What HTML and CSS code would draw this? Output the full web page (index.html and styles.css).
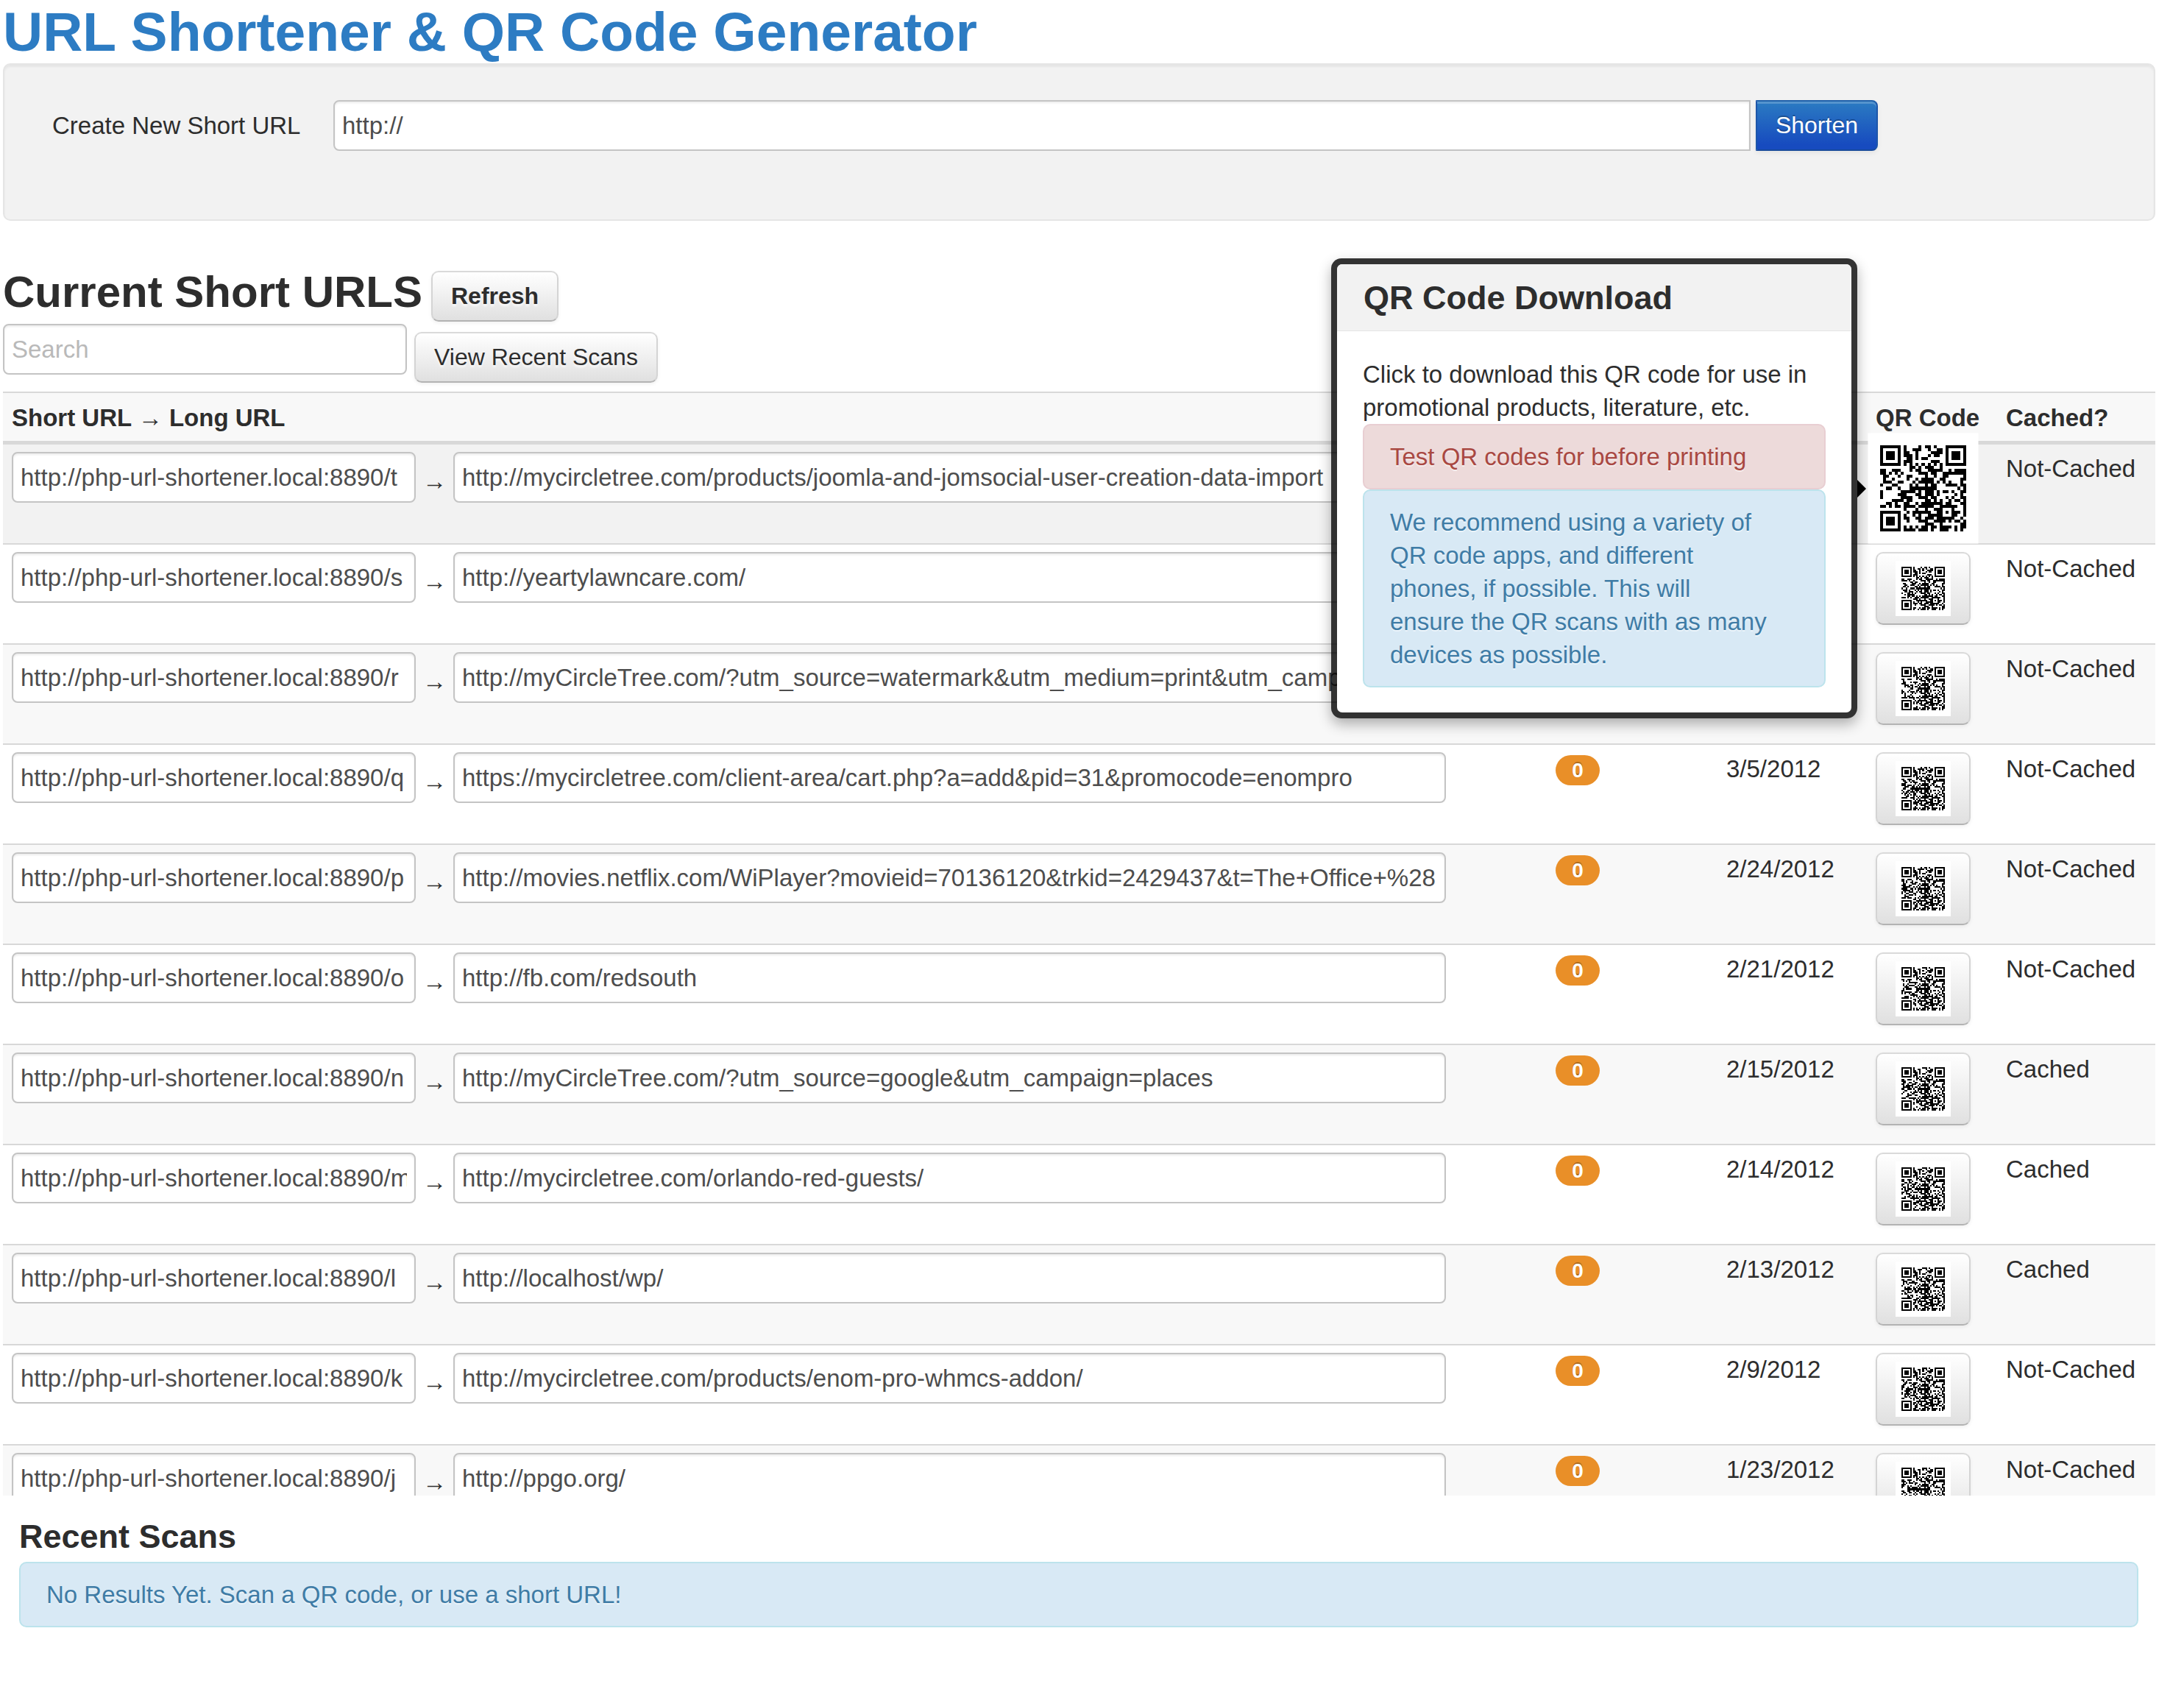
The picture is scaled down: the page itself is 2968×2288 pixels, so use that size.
FILE: index.html
```html
<!DOCTYPE html>
<html lang="en">
<head>
<meta charset="utf-8">
<title>URL Shortener &amp; QR Code Generator</title>
<link rel="stylesheet" href="styles.css">
</head>
<body>
<h1 class="page-title">URL Shortener &amp; QR Code Generator</h1>

<form class="well create-form">
  <label class="create-label" for="new-url">Create New Short URL</label>
  <input class="field field-joined" id="new-url" type="text" value="http://">
  <button class="btn btn-primary" type="submit">Shorten</button>
</form>

<main class="current">
  <div class="current-head">
    <h2 class="section-title">Current Short URLS</h2>
    <button class="btn btn-strong" type="button">Refresh</button>
  </div>
  <div class="toolbar">
    <input class="field field-short" type="search" placeholder="Search" aria-label="Search">
    <button class="btn toolbar-btn" type="button">View Recent Scans</button>
  </div>

  <div class="scroller">
    <table class="urls">
      <colgroup><col><col class="col-scans"><col class="col-date"><col class="col-qr"><col class="col-cached"></colgroup>
      <thead>
        <tr><th>Short URL <span class="to">→</span> Long URL</th><th></th><th></th><th>QR Code</th><th>Cached?</th></tr>
      </thead>
      <tbody>
        <tr class="active">
          <td><div class="pair"><input class="field field-short" aria-label="Short URL" value="http://php-url-shortener.local:8890/t"><span class="arrow to">→</span><input class="field" aria-label="Long URL" value="http://mycircletree.com/products/joomla-and-jomsocial-user-creation-data-import"></div></td>
          <td></td><td></td>
          <td><button class="btn btn-qr" type="button" aria-label="QR code" data-url="http://php-url-shortener.local:8890/t"></button></td><td>Not-Cached</td>
        </tr>
        <tr>
          <td><div class="pair"><input class="field field-short" aria-label="Short URL" value="http://php-url-shortener.local:8890/s"><span class="arrow to">→</span><input class="field" aria-label="Long URL" value="http://yeartylawncare.com/"></div></td>
          <td></td><td></td>
          <td><button class="btn btn-qr" type="button" aria-label="QR code" data-url="http://php-url-shortener.local:8890/s"></button></td><td>Not-Cached</td>
        </tr>
        <tr>
          <td><div class="pair"><input class="field field-short" aria-label="Short URL" value="http://php-url-shortener.local:8890/r"><span class="arrow to">→</span><input class="field" aria-label="Long URL" value="http://myCircleTree.com/?utm_source=watermark&amp;utm_medium=print&amp;utm_camp"></div></td>
          <td></td><td></td>
          <td><button class="btn btn-qr" type="button" aria-label="QR code" data-url="http://php-url-shortener.local:8890/r"></button></td><td>Not-Cached</td>
        </tr>
        <tr>
          <td><div class="pair"><input class="field field-short" aria-label="Short URL" value="http://php-url-shortener.local:8890/q"><span class="arrow to">→</span><input class="field" aria-label="Long URL" value="https://mycircletree.com/client-area/cart.php?a=add&amp;pid=31&amp;promocode=enompro"></div></td>
          <td><span class="badge">0</span></td><td>3/5/2012</td>
          <td><button class="btn btn-qr" type="button" aria-label="QR code" data-url="http://php-url-shortener.local:8890/q"></button></td><td>Not-Cached</td>
        </tr>
        <tr>
          <td><div class="pair"><input class="field field-short" aria-label="Short URL" value="http://php-url-shortener.local:8890/p"><span class="arrow to">→</span><input class="field" aria-label="Long URL" value="http://movies.netflix.com/WiPlayer?movieid=70136120&amp;trkid=2429437&amp;t=The+Office+%28"></div></td>
          <td><span class="badge">0</span></td><td>2/24/2012</td>
          <td><button class="btn btn-qr" type="button" aria-label="QR code" data-url="http://php-url-shortener.local:8890/p"></button></td><td>Not-Cached</td>
        </tr>
        <tr>
          <td><div class="pair"><input class="field field-short" aria-label="Short URL" value="http://php-url-shortener.local:8890/o"><span class="arrow to">→</span><input class="field" aria-label="Long URL" value="http://fb.com/redsouth"></div></td>
          <td><span class="badge">0</span></td><td>2/21/2012</td>
          <td><button class="btn btn-qr" type="button" aria-label="QR code" data-url="http://php-url-shortener.local:8890/o"></button></td><td>Not-Cached</td>
        </tr>
        <tr>
          <td><div class="pair"><input class="field field-short" aria-label="Short URL" value="http://php-url-shortener.local:8890/n"><span class="arrow to">→</span><input class="field" aria-label="Long URL" value="http://myCircleTree.com/?utm_source=google&amp;utm_campaign=places"></div></td>
          <td><span class="badge">0</span></td><td>2/15/2012</td>
          <td><button class="btn btn-qr" type="button" aria-label="QR code" data-url="http://php-url-shortener.local:8890/n"></button></td><td>Cached</td>
        </tr>
        <tr>
          <td><div class="pair"><input class="field field-short" aria-label="Short URL" value="http://php-url-shortener.local:8890/m"><span class="arrow to">→</span><input class="field" aria-label="Long URL" value="http://mycircletree.com/orlando-red-guests/"></div></td>
          <td><span class="badge">0</span></td><td>2/14/2012</td>
          <td><button class="btn btn-qr" type="button" aria-label="QR code" data-url="http://php-url-shortener.local:8890/m"></button></td><td>Cached</td>
        </tr>
        <tr>
          <td><div class="pair"><input class="field field-short" aria-label="Short URL" value="http://php-url-shortener.local:8890/l"><span class="arrow to">→</span><input class="field" aria-label="Long URL" value="http://localhost/wp/"></div></td>
          <td><span class="badge">0</span></td><td>2/13/2012</td>
          <td><button class="btn btn-qr" type="button" aria-label="QR code" data-url="http://php-url-shortener.local:8890/l"></button></td><td>Cached</td>
        </tr>
        <tr>
          <td><div class="pair"><input class="field field-short" aria-label="Short URL" value="http://php-url-shortener.local:8890/k"><span class="arrow to">→</span><input class="field" aria-label="Long URL" value="http://mycircletree.com/products/enom-pro-whmcs-addon/"></div></td>
          <td><span class="badge">0</span></td><td>2/9/2012</td>
          <td><button class="btn btn-qr" type="button" aria-label="QR code" data-url="http://php-url-shortener.local:8890/k"></button></td><td>Not-Cached</td>
        </tr>
        <tr>
          <td><div class="pair"><input class="field field-short" aria-label="Short URL" value="http://php-url-shortener.local:8890/j"><span class="arrow to">→</span><input class="field" aria-label="Long URL" value="http://ppgo.org/"></div></td>
          <td><span class="badge">0</span></td><td>1/23/2012</td>
          <td><button class="btn btn-qr" type="button" aria-label="QR code" data-url="http://php-url-shortener.local:8890/j"></button></td><td>Not-Cached</td>
        </tr>
      </tbody>
    </table>
  </div>

  <aside class="popover" role="tooltip">
    <div class="popover-inner">
      <h3 class="popover-title">QR Code Download</h3>
      <div class="popover-body">
        <p class="popover-text">Click to download this QR code for use in promotional products, literature, etc.</p>
        <div class="alert alert-error">Test QR codes for before printing</div>
        <div class="alert alert-info">We recommend using a variety of QR code apps, and different phones, if possible. This will ensure the QR scans with as many devices as possible.</div>
      </div>
    </div>
  </aside>
</main>

<section class="recent">
  <h3 class="recent-title">Recent Scans</h3>
  <div class="alert alert-info">No Results Yet. Scan a QR code, or use a short URL!</div>
</section>
<script src="qr.js"></script>
</body>
</html>
```
FILE: styles.css
```css
* { box-sizing: border-box; }

body {
  margin: 0;
  padding: 0 39px 40px 4px;
  background: #fff;
  color: #2d2d2d;
  font-family: "Helvetica Neue", "Liberation Sans", Arial, sans-serif;
  font-size: 33px;
  line-height: 45px;
}

h1, h2, h3, p { margin: 0; }

.page-title {
  font-size: 75px;
  line-height: 86px;
  color: #2d7cc3;
}

/* Form controls */
.field {
  width: 100%;
  min-width: 0;
  height: 69px;
  padding: 10px;
  border: 2px solid #c4c4c4;
  border-radius: 8px;
  background: #fff;
  box-shadow: inset 0 2px 3px rgba(0, 0, 0, .08);
  color: #4d4d4d;
  font: inherit;
  appearance: none;
}
.field::placeholder { color: #b9b9b9; opacity: 1; }
.field-short { width: 549px; flex: none; }
.field-joined { border-radius: 8px 0 0 8px; }

.btn {
  flex: none;
  height: 69px;
  padding: 10px 25px;
  border: 2px solid;
  border-color: #dadada #d4d4d4 #b3b3b3;
  border-radius: 10px;
  background: linear-gradient(#fff, #e0e0e0);
  box-shadow: inset 0 2px 0 rgba(255, 255, 255, .2), 0 2px 5px rgba(0, 0, 0, .06);
  color: #2d2d2d;
  font: inherit;
  font-size: 32px;
  line-height: 45px;
  text-shadow: 0 3px 3px rgba(255, 255, 255, .75);
}
.btn-strong { font-weight: bold; }
.btn-primary {
  border-color: #1f60aa #1d56aa #184a9c;
  border-radius: 0 8px 8px 0;
  background: linear-gradient(#2b7bc2, #174bbf 90%);
  box-shadow: inset 0 3px 0 rgba(255, 255, 255, .2), 0 3px 6px rgba(0, 0, 0, .06);
  color: #fff;
  text-shadow: 0 -2px 0 rgba(0, 0, 0, .25);
}

.well {
  padding: 48px 375px 93px 65px;
  border: 2px solid #e5e5e5;
  border-radius: 10px;
  background: #f2f2f2;
  box-shadow: inset 0 3px 3px rgba(0, 0, 0, .05);
}
.create-form { display: flex; align-items: center; }
.create-label { flex: none; width: 382px; }
.create-form .btn { margin-left: 7px; }

/* Current short URLs */
.current { position: relative; padding-top: 57px; }
.current-head { display: flex; align-items: flex-end; gap: 12px; }
.section-title { font-size: 60px; line-height: 80px; }
.toolbar {
  display: flex;
  align-items: flex-start;
  gap: 10px;
  min-height: 80px;
  margin: 3px 0 12px;
}
.toolbar-btn { align-self: flex-end; }

.scroller { height: 1500px; overflow: hidden; }
.urls {
  width: 100%;
  table-layout: fixed;
  border-spacing: 0;
}
.col-scans { width: 232px; }
.col-date { width: 203px; }
.col-qr { width: 177px; }
.col-cached { width: 215px; }
.urls th {
  padding: 11px 12px 9px;
  border-top: 2px solid #d8d8d8;
  border-bottom: 3px solid #d8d8d8;
  background: #f8f8f8;
  text-align: left;
  white-space: nowrap;
}
.urls td {
  padding: 10px 12px 25px;
  border-top: 2px solid #d8d8d8;
  vertical-align: top;
}
.urls tbody tr:nth-child(odd) td { background: #f8f8f8; }
.urls tbody tr.active td { background: #f2f2f2; }
.pair { display: flex; padding-right: 125px; }
.to { font-family: "Liberation Serif", serif; line-height: 1; }
.arrow { flex: none; width: 51px; padding-top: 24px; text-align: center; }

.badge {
  display: block;
  width: 60px;
  height: 41px;
  margin-top: 4px;
  border-radius: 21px;
  background: #e98f28;
  color: #fff;
  font-size: 28px;
  font-weight: bold;
  line-height: 41px;
  text-align: center;
  text-shadow: 0 -2px 0 rgba(0, 0, 0, .25);
}

.btn-qr { display: block; height: 99px; width: 129px; }
.qr {
  display: block;
  width: 75px;
  height: 75px;
  background: #fff;
  shape-rendering: crispEdges;
}
.active .qr {
  position: relative;
  z-index: 2;
  transform: scale(2);
}

/* Alerts */
.alert {
  padding: 20px 75px 20px 35px;
  border: 2px solid;
  border-radius: 10px;
  text-shadow: 0 2px 0 rgba(255, 255, 255, .5);
}
.alert-info { border-color: #bce3ec; background: #d8e9f5; color: #3f7ca6; }
.alert-error { border-color: #e8ced2; background: #eddada; color: #a94842; }

/* Popover beside the active QR code */
.popover {
  position: absolute;
  z-index: 1;
  top: 51px;
  right: 405px;
  width: 715px;
  padding: 8px;
  border-radius: 14px;
  background: rgba(0, 0, 0, .8);
  box-shadow: 0 8px 18px rgba(0, 0, 0, .3);
}
.popover::after {
  content: "";
  position: absolute;
  left: 100%;
  top: 50%;
  margin-top: -12px;
  border: 12px solid transparent;
  border-left-color: #000;
  border-right-width: 0;
}
.popover-inner { overflow: hidden; border-radius: 7px; background: #fff; }
.popover-title {
  padding: 23px 36px 22px;
  border-bottom: 1px solid #e5e5e5;
  background: #f2f2f2;
  font-size: 45px;
  line-height: 45px;
}
.popover-body { padding: 36px 35px 34px; }

/* Recent scans */
.recent { padding: 22px 23px 0 22px; }
.recent-title { font-size: 45px; line-height: 68px; }
```
FILE: qr.js
```js
// Draws a version 3, level L QR code into every button with a data-url.
(function () {
  var SIZE = 29, DATA = 55, ECC = 15, QUIET = 4, FORMAT = 0x662f;
  var exp = [], log = [];
  for (var i = 0, x = 1; i < 255; i++) {
    exp[i] = x; log[x] = i;
    x <<= 1; if (x & 256) x ^= 0x11d;
  }
  function mul(a, b) { return a && b ? exp[(log[a] + log[b]) % 255] : 0; }

  function codewords(text) {
    var bits = [];
    function put(v, n) { while (n--) bits.push((v >> n) & 1); }
    put(4, 4); put(text.length, 8);
    for (var i = 0; i < text.length; i++) put(text.charCodeAt(i), 8);
    put(0, 4);
    var out = [];
    for (i = 0; i < bits.length; i += 8) out.push(parseInt(bits.slice(i, i + 8).join(""), 2));
    for (var pad = 0xec; out.length < DATA; pad ^= 0xec ^ 0x11) out.push(pad);
    var gen = [1];
    for (i = 0; i < ECC; i++) {
      var next = gen.concat(0);
      for (var j = 0; j < gen.length; j++) next[j + 1] ^= mul(gen[j], exp[i]);
      gen = next;
    }
    var rem = out.slice();
    for (i = 0; i < ECC; i++) rem.push(0);
    for (i = 0; i < DATA; i++) {
      var lead = rem[i];
      for (j = 0; j <= ECC; j++) rem[i + j] ^= mul(gen[j], lead);
    }
    return out.concat(rem.slice(DATA));
  }

  function mask(r, c) { return ((r >> 1) + Math.floor(c / 3)) % 2 === 0 ? 1 : 0; }
  function bit(n) { return (FORMAT >> n) & 1; }

  function build(words) {
    var m = [], r, c, i;
    for (r = 0; r < SIZE; r++) m.push(new Array(SIZE).fill(null));
    function square(cr, cc, rad, light) {
      for (var dr = -rad; dr <= rad; dr++) for (var dc = -rad; dc <= rad; dc++) {
        var y = cr + dr, x = cc + dc;
        if (y >= 0 && x >= 0 && y < SIZE && x < SIZE)
          m[y][x] = light.indexOf(Math.max(Math.abs(dr), Math.abs(dc))) < 0 ? 1 : 0;
      }
    }
    square(3, 3, 4, [2, 4]);
    square(3, SIZE - 4, 4, [2, 4]);
    square(SIZE - 4, 3, 4, [2, 4]);
    square(22, 22, 2, [1]);
    for (i = 8; i < SIZE - 8; i++) m[6][i] = m[i][6] = (i + 1) % 2;

    for (i = 0; i < 6; i++) m[i][8] = bit(i);
    m[7][8] = bit(6); m[8][8] = bit(7); m[8][7] = bit(8);
    for (i = 9; i < 15; i++) m[8][14 - i] = bit(i);
    for (i = 0; i < 8; i++) m[8][SIZE - 1 - i] = bit(i);
    for (i = 8; i < 15; i++) m[SIZE - 15 + i][8] = bit(i);
    m[SIZE - 8][8] = 1;

    var n = 0, up = true;
    for (c = SIZE - 1; c > 0; c -= 2) {
      if (c === 6) c--;
      for (var k = 0; k < SIZE; k++) {
        r = up ? SIZE - 1 - k : k;
        for (var d = 0; d < 2; d++) if (m[r][c - d] === null) {
          m[r][c - d] = ((words[n >> 3] >> (7 - n % 8)) & 1) ^ mask(r, c - d);
          n++;
        }
      }
      up = !up;
    }
    return m;
  }

  document.querySelectorAll("[data-url]").forEach(function (button) {
    var d = "";
    build(codewords(button.dataset.url)).forEach(function (row, r) {
      row.forEach(function (on, c) { if (on) d += "M" + (c + QUIET) + " " + (r + QUIET) + "h1v1h-1z"; });
    });
    button.innerHTML = '<svg class="qr" viewBox="0 0 37 37" aria-hidden="true"><path d="' + d + '"/></svg>';
  });
})();
```
